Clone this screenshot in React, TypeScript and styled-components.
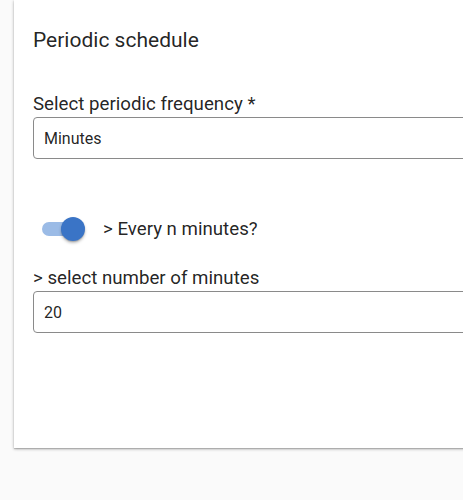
import * as React from "react";
import styled, { createGlobalStyle } from "styled-components";

const GlobalStyle = createGlobalStyle`
  html, body {
    margin: 0;
    padding: 0;
    background: #fafafa;
    overflow: hidden;
  }
  body {
    font-family: Roboto, "Liberation Sans", sans-serif;
    color: rgba(0, 0, 0, 0.87);
  }
`;

const Page = styled.div`
  width: 463px;
  height: 500px;
  overflow: hidden;
`;

const Card = styled.section`
  margin-left: 14px;
  width: 520px;
  height: 448px;
  box-sizing: border-box;
  padding: 28px 0 0 19px;
  background: #fff;
  box-shadow: 0 1px 3px rgba(0, 0, 0, 0.3), 0 1px 1px rgba(0, 0, 0, 0.14);
`;

const Title = styled.h2`
  margin: 0;
  font-size: 21px;
  line-height: 24px;
  font-weight: 400;
`;

const Field = styled.div<{ $top: number }>`
  margin-top: ${(p) => p.$top}px;
  display: flex;
  flex-direction: column;
`;

const Label = styled.label`
  font-size: 18.7px;
  line-height: 22px;
  margin-bottom: 2px;
`;

const Input = styled.input`
  box-sizing: border-box;
  width: 100%;
  height: 42px;
  border: 1px solid #8a8a8a;
  border-radius: 4px;
  padding: 0 10px;
  font-family: Roboto, "Liberation Sans", sans-serif;
  font-size: 16px;
  color: rgba(0, 0, 0, 0.87);
  background: #fff;
  outline: none;
`;

const ToggleRow = styled.div`
  display: flex;
  align-items: center;
  gap: 25px;
  margin-top: 58px;
  padding-left: 9px;
  height: 24px;
`;

const Track = styled.span<{ $on: boolean }>`
  position: relative;
  display: inline-block;
  width: 36px;
  height: 14px;
  border-radius: 7px;
  background: ${(p) => (p.$on ? "#9bbbe6" : "#bdbdbd")};
`;

const Thumb = styled.span<{ $on: boolean }>`
  position: absolute;
  top: -5px;
  left: ${(p) => (p.$on ? "19px" : "-3px")};
  width: 24px;
  height: 24px;
  border-radius: 50%;
  background: ${(p) => (p.$on ? "#3a74c6" : "#fafafa")};
  box-shadow: 0 2px 3px rgba(0, 0, 0, 0.25), 0 1px 1px rgba(0, 0, 0, 0.14);
`;

const ToggleText = styled.span`
  font-size: 18.7px;
  line-height: 22px;
`;

export default function App() {
  const [on, setOn] = React.useState(true);
  const [freq, setFreq] = React.useState("Minutes");
  const [mins, setMins] = React.useState("20");
  return (
    <Page>
      <GlobalStyle />
      <Card>
        <Title>Periodic schedule</Title>
        <Field $top={41}>
          <Label>Select periodic frequency *</Label>
          <Input value={freq} onChange={(e) => setFreq(e.target.value)} />
        </Field>
        <ToggleRow onClick={() => setOn(!on)}>
          <Track $on={on}>
            <Thumb $on={on} />
          </Track>
          <ToggleText>&gt; Every n minutes?</ToggleText>
        </ToggleRow>
        <Field $top={26}>
          <Label>&gt; select number of minutes</Label>
          <Input value={mins} onChange={(e) => setMins(e.target.value)} />
        </Field>
      </Card>
    </Page>
  );
}
